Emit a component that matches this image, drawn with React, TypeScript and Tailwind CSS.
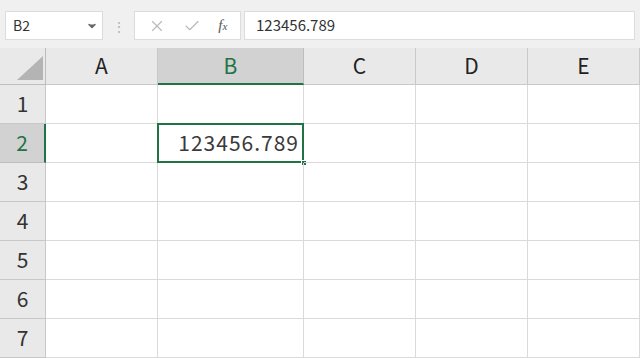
import { ChevronDown, X, Check } from "lucide-react";

const cols = ["A", "B", "C", "D", "E"];
const rows = [1, 2, 3, 4, 5, 6, 7];
const font = { fontFamily: '"Noto Sans CJK JP", "Noto Sans", sans-serif' };

export default function App() {
  return (
    <div className="h-[358px] w-[640px] overflow-hidden bg-white text-[#222]" style={font}>
      {/* formula bar */}
      <div className="flex h-[48px] items-start bg-[#f0f0f0] px-[5px] pt-[11px]">
        <div className="flex h-[29px] w-[98px] items-center justify-between border border-[#dcdcdc] bg-white pl-[7px] pr-[4px] text-[14px] text-[#333]">
          <span>B2</span>
          <ChevronDown className="h-3 w-3 fill-[#666] text-[#666]" strokeWidth={3} />
        </div>
        <div className="flex h-[29px] w-[31px] items-center justify-center text-[14px] leading-none text-[#b5b5b5]">⋮</div>
        <div className="flex h-[29px] w-[107px] items-center justify-around border border-[#dcdcdc] bg-white px-1 text-[#b8b8b8]">
          <X className="h-[18px] w-[18px]" strokeWidth={1.5} />
          <Check className="h-[18px] w-[18px]" strokeWidth={1.5} />
          <span className="text-[15px] italic text-[#555]" style={{ fontFamily: '"Liberation Serif", serif' }}>
            f<span className="text-[11px]">x</span>
          </span>
        </div>
        <div className="ml-[3px] flex h-[29px] flex-1 items-center border border-[#dcdcdc] bg-white pl-[11px] text-[15px] text-[#333]">
          123456.789
        </div>
      </div>

      {/* grid */}
      <div className="grid grid-cols-[46px_112px_146px_112px_112px_112px] grid-rows-[37px_repeat(7,39px)]">
        <div className="flex items-end justify-end border-b border-r border-[#bdbdbd] bg-[#e9e9e9] pb-[4px] pr-[2px]">
          <div className="h-0 w-0 border-b-[24px] border-l-[26px] border-b-[#b4b4b4] border-l-transparent" />
        </div>
        {cols.map((c) => (
          <div
            key={c}
            className={
              c === "B"
                ? "flex items-center justify-center border-b-2 border-r border-b-[#217346] border-r-[#bdbdbd] bg-[#d2d2d2] text-[21px] text-[#217346]"
                : "flex items-center justify-center border-b border-r border-[#c8c8c8] bg-[#e9e9e9] text-[21px] text-[#222]"
            }
          >
            {c}
          </div>
        ))}
        {rows.map((r) => (
          <div key={r} className="contents">
            <div
              className={
                r === 2
                  ? "flex items-center justify-center border-b border-r-2 border-b-[#bdbdbd] border-r-[#217346] bg-[#d2d2d2] text-[21px] text-[#217346]"
                  : "flex items-center justify-center border-b border-r border-[#c8c8c8] bg-[#e9e9e9] text-[21px] text-[#333]"
              }
            >
              {r}
            </div>
            {cols.map((c) => (
              <div key={c} className="relative border-b border-r border-[#dadada]">
                {r === 2 && c === "B" && (
                  <>
                    <div className="absolute -left-px -top-px bottom-[-1px] right-[-1px] flex items-center justify-end border-2 border-[#217346] pr-[3px] text-[21px] tracking-[1px] text-[#3a3a3a]">
                      123456.789
                    </div>
                    <div className="absolute bottom-[-4px] right-[-4px] h-[6px] w-[6px] border border-white bg-[#217346]" />
                  </>
                )}
              </div>
            ))}
          </div>
        ))}
      </div>
    </div>
  );
}
